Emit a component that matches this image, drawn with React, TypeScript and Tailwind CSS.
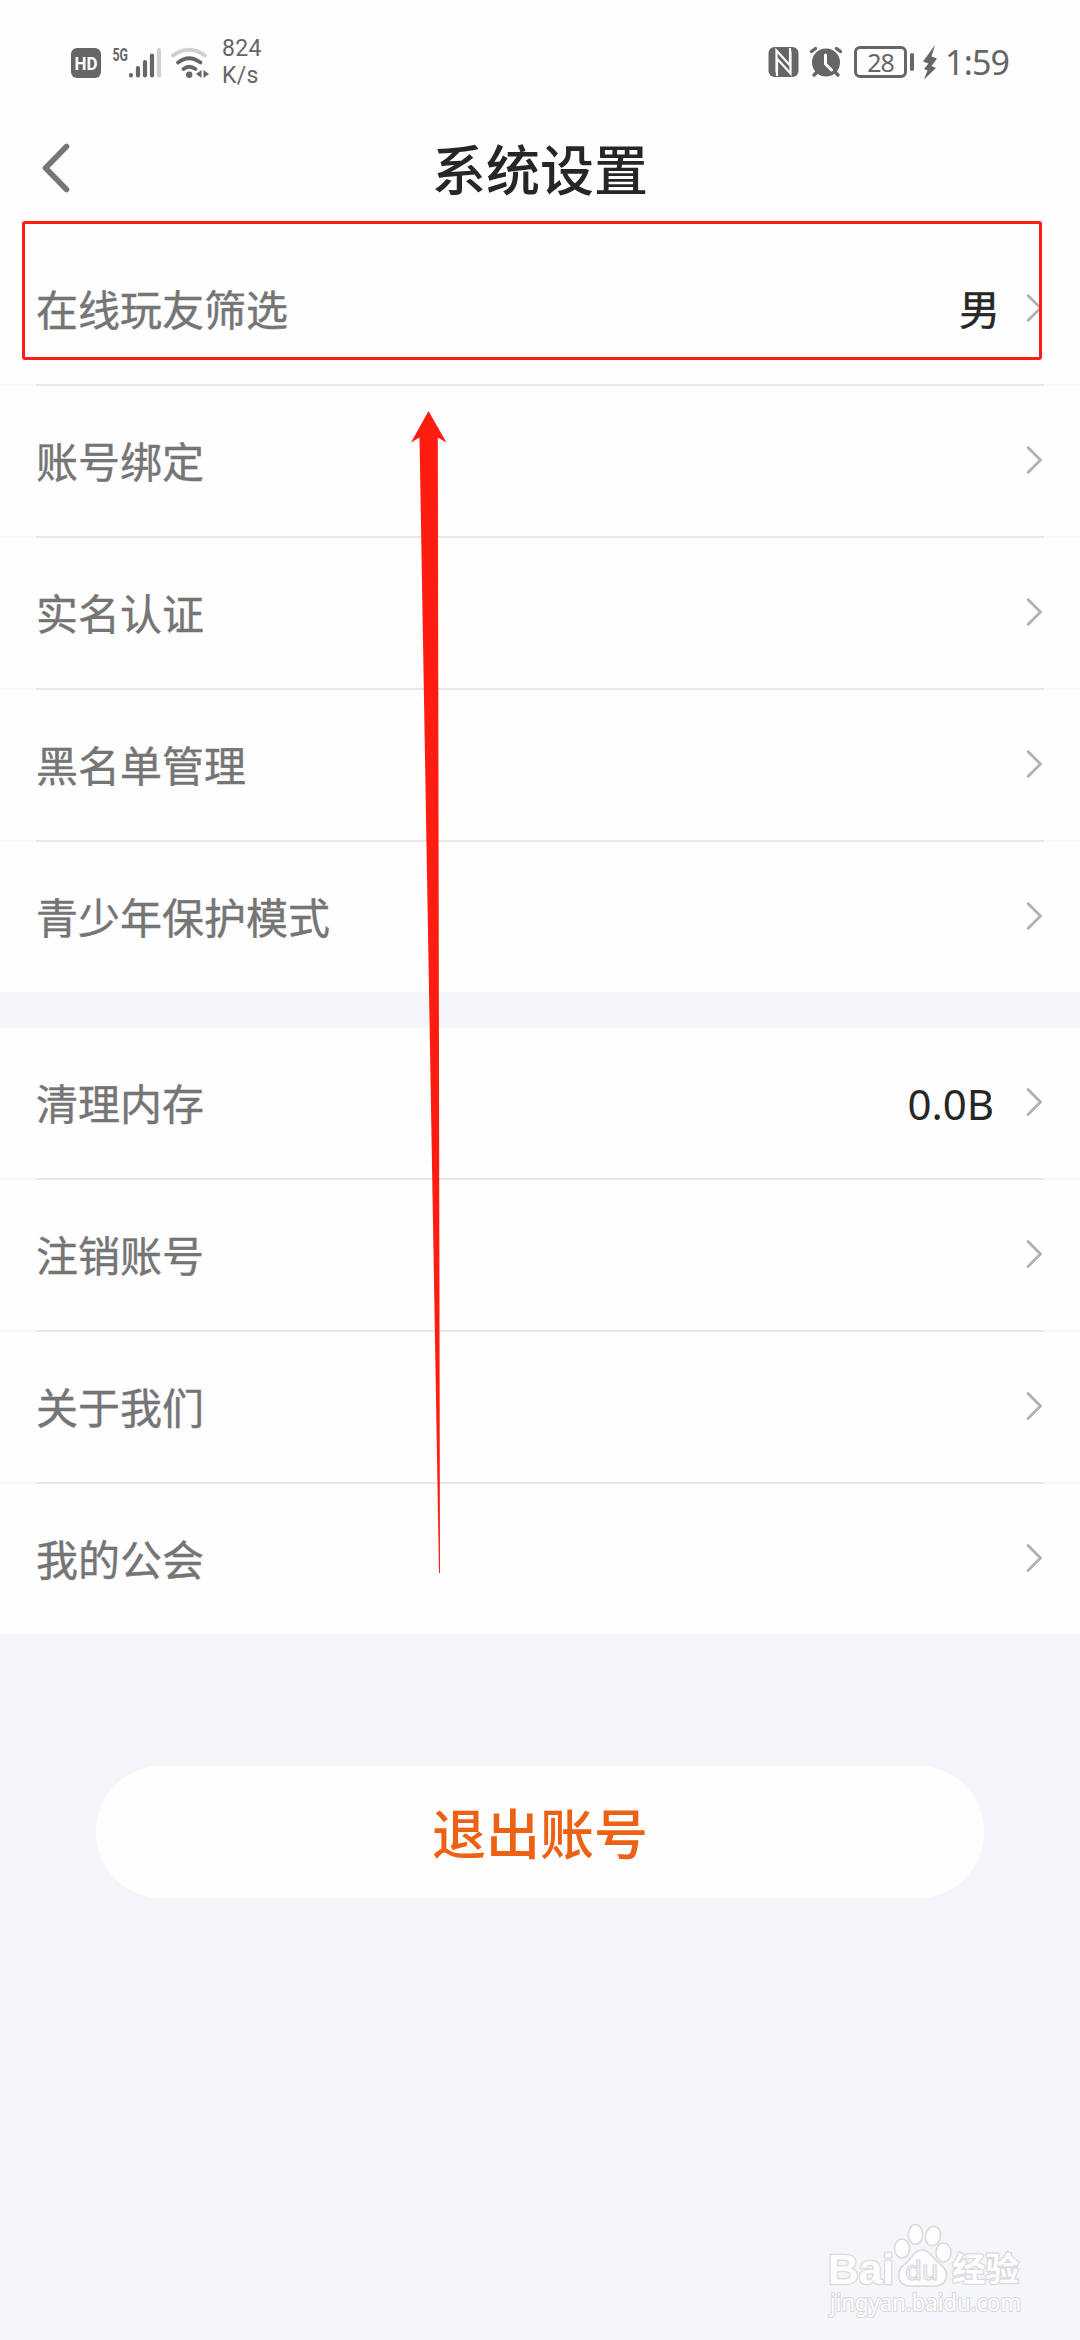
type SettingItem = {
  label: string;
  value?: string;
};

const GENERAL_ITEMS: SettingItem[] = [
  { label: "在线玩友筛选", value: "男" },
  { label: "账号绑定" },
  { label: "实名认证" },
  { label: "黑名单管理" },
  { label: "青少年保护模式" },
];

const ACCOUNT_ITEMS: SettingItem[] = [
  { label: "清理内存", value: "0.0B" },
  { label: "注销账号" },
  { label: "关于我们" },
  { label: "我的公会" },
];

function SignalIcons() {
  return (
    <svg width="140" height="34" viewBox="0 0 140 34" className="ml-[70px]">
      <rect x="1" y="3" width="30" height="30" rx="6" fill="#666" />
      <text x="16" y="24.5" textAnchor="middle" textLength="23" lengthAdjust="spacingAndGlyphs" fontSize="19" fontWeight="700" fill="#fff" fontFamily="Roboto, sans-serif">
        HD
      </text>
      <text x="42.5" y="15.5" textLength="15.5" lengthAdjust="spacingAndGlyphs" fontSize="19" fontWeight="700" fill="#666" fontFamily="Roboto, sans-serif">
        5G
      </text>
      <g strokeWidth="4.2" strokeLinecap="round" stroke="#666">
        <path d="M61 30.2v.2M68 23v7.5M75 17v13.5M82 10.5v20" />
        <path d="M89 5v25.5" stroke="#d0d0d0" />
      </g>
      <g fill="none" strokeWidth="3.8" strokeLinecap="round">
        <path d="M103 10.5Q119 -1 135 10.5" stroke="#d0d0d0" />
        <path d="M108 17.5Q119 9 130.5 17.5" stroke="#666" />
        <path d="M113.5 24Q119 19.5 125.5 24" stroke="#666" />
      </g>
      <circle cx="119.2" cy="29.8" r="3.2" fill="#666" />
      <path d="M131.5 25v8l-5.500-4zM133.500 25v8l5.500-4z" fill="#666" />
    </svg>
  );
}

function NfcIcon() {
  return (
    <svg width="31" height="32" viewBox="0 0 31 32">
      <rect x="0.5" y="1" width="30" height="30" rx="6" fill="#666" />
      <path d="M8.500 26.500V4.500L22 19.500V2M22.500 5.500V27.500L9 12.500V30" fill="none" stroke="#fff" strokeWidth="2.200" />
    </svg>
  );
}

function AlarmIcon() {
  return (
    <svg width="34" height="32" viewBox="0 0 34 32" className="ml-[10px]">
      <g stroke="#666" strokeWidth="3.4" strokeLinecap="round">
        <path d="M2.500 5.500L6.500 2.500M31.500 5.500L27.500 2.500M8 26L5 29M26 26L29 29" />
      </g>
      <circle cx="17" cy="16.500" r="14" fill="#666" />
      <path d="M16.500 9v9l6 6" fill="none" stroke="#fff" strokeWidth="3" strokeLinecap="round" />
    </svg>
  );
}

function StatusBar() {
  return (
    <div className="flex h-[124px] items-center text-[#666]">
      <SignalIcons />
      <div className="ml-[12px] font-[Roboto,sans-serif] text-[23px] leading-[27px] tracking-[0.3px]">
        <div>824</div>
        <div>K/s</div>
      </div>
      <div className="mr-[72px] ml-auto flex items-center">
        <NfcIcon />
        <AlarmIcon />
        <div className="ml-[11px] flex h-[32px] w-[53px] items-center justify-center rounded-[6px] border-[3px] border-[#666] font-['Noto_Sans',sans-serif] text-[25px] leading-none tracking-[-1px]">
          28
        </div>
        <div className="ml-[3px] h-[18px] w-[4px] rounded-full bg-[#666]" />
        <svg width="16" height="36" viewBox="0 0 16 36" className="ml-[8px]">
          <path d="M13 1L1 17.500L6.500 19.500L2 25L5.500 26.500L2 35.500L14 24L9.500 22L15 14.500L9.500 12.500Z" fill="#666" />
        </svg>
        <div className="ml-[7px] w-[63px] font-['Noto_Sans',sans-serif] text-[34px] leading-none tracking-[-0.8px] whitespace-nowrap">
          1:59
        </div>
      </div>
    </div>
  );
}

function Header() {
  return (
    <header className="flex h-[110px] items-start">
      <svg width="28" height="50" viewBox="0 0 28 50" className="mt-[19px] ml-[42px]">
        <path d="M24.500 3.500L3.500 25L24.500 46.500" fill="none" stroke="#757575" strokeWidth="5.500" strokeLinecap="round" strokeLinejoin="round" />
      </svg>
      <h1 className="mt-[4px] mr-[70px] flex-1 text-center text-[54px] leading-[80px] font-medium text-[#262626]">
        系统设置
      </h1>
    </header>
  );
}

function SettingRow({ item }: { item: SettingItem }) {
  const isSize = item.value?.endsWith("B");
  return (
    <div className="flex h-[150px] items-center pr-[38px] pl-[36px] text-[42px]">
      <span className="pb-[4px] text-[#757575] [-webkit-text-stroke:0.4px_#757575]">{item.label}</span>
      {item.value ? (
        <span
          className={
            isSize
              ? "mr-[32px] ml-auto font-['Noto_Sans',sans-serif] text-[#262626]"
              : "mr-[26px] ml-auto pb-[3px] text-[41px] text-[#262626] [-webkit-text-stroke:0.5px_#262626]"
          }
        >
          {item.value}
        </span>
      ) : null}
      <svg width="16" height="30" viewBox="0 0 16 30" className={item.value ? "" : "ml-auto"}>
        <path d="M2 1.500L14.500 14L2 26.500" fill="none" stroke="#b2b2b2" strokeWidth="2.800" strokeLinecap="round" />
      </svg>
    </div>
  );
}

function SettingGroup({ items }: { items: SettingItem[] }) {
  return (
    <section className="bg-[#fefefe]">
      {items.map((item, i) => (
        <div key={item.label}>
          {i > 0 ? (
            <div className="h-[2px] bg-[#f8f8f8] px-[36px]">
              <div className="h-full bg-[#e8e8e8]" />
            </div>
          ) : null}
          <SettingRow item={item} />
        </div>
      ))}
    </section>
  );
}

// red frame round the first row, with the long arrow that points at it
function Highlight() {
  return (
    <>
      <div className="absolute top-[221px] left-[22px] h-[139px] w-[1020px] rounded-[3px] border-[3px] border-[#ff1d12]" />
      <svg width="40" height="1164" viewBox="0 0 40 1164" className="absolute top-[410px] left-[409px]">
        <path d="M19.500 1L37.500 32.500L28.800 27.500L31 1163H30L10.500 27.500L2 32.500Z" fill="#ff1d12" />
      </svg>
    </>
  );
}

function Watermark() {
  return (
    <svg width="230" height="120" viewBox="0 0 230 120" className="absolute top-[2215px] left-[820px] overflow-visible">
      <g fill="#fdfdfe" stroke="#d9dadd" strokeWidth="1.6">
        <ellipse cx="82" cy="33.5" rx="7.5" ry="9.5" />
        <ellipse cx="95.5" cy="19.5" rx="7.2" ry="10" />
        <ellipse cx="113" cy="21" rx="7.5" ry="9.8" transform="rotate(12 113 21)" />
        <ellipse cx="123.5" cy="37.5" rx="7.5" ry="9.5" />
        <path d="M102 35C110 35 113 44 120 49C127 54 128 61 125 66C121 73 111 71 102 71C93 71 84 73 80 66C77 60 79 53 85 49C92 44 94 35 102 35Z" />
        <g strokeWidth="2.6" strokeLinejoin="round" className="[paint-order:stroke]">
          <text x="8" y="69" textLength="66" lengthAdjust="spacingAndGlyphs" fontSize="43" fontWeight="700" fontFamily="'Liberation Sans', sans-serif">
            Bai
          </text>
          <text x="132" y="66" textLength="67" lengthAdjust="spacingAndGlyphs" fontSize="33" fontWeight="700" fontFamily="'Noto Sans CJK SC', sans-serif">
            经验
          </text>
          <text x="10" y="95.5" textLength="191" lengthAdjust="spacingAndGlyphs" fontSize="23" strokeWidth="2.2" fontFamily="'Noto Sans', sans-serif">
            jingyan.baidu.com
          </text>
        </g>
        <text x="85" y="65" textLength="33" lengthAdjust="spacingAndGlyphs" fontSize="27" fontWeight="500" fill="#f3f4f7" strokeWidth="1.2" fontFamily="Inter, sans-serif">
          du
        </text>
      </g>
    </svg>
  );
}

export default function App() {
  return (
    <div className="relative h-[2340px] w-[1080px] overflow-hidden bg-[#f5f6fa] font-['Noto_Sans_CJK_SC',sans-serif]">
      <div className="bg-[#fefefe]">
        <StatusBar />
        <Header />
      </div>
      <SettingGroup items={GENERAL_ITEMS} />
      <div className="h-[36px]" />
      <SettingGroup items={ACCOUNT_ITEMS} />
      <button className="mx-auto mt-[132px] flex h-[132px] w-[888px] items-center justify-center rounded-full bg-[#fefefe] pb-[2px] text-[54px] font-medium text-[#ed6114]">
        退出账号
      </button>
      <Highlight />
      <Watermark />
    </div>
  );
}
